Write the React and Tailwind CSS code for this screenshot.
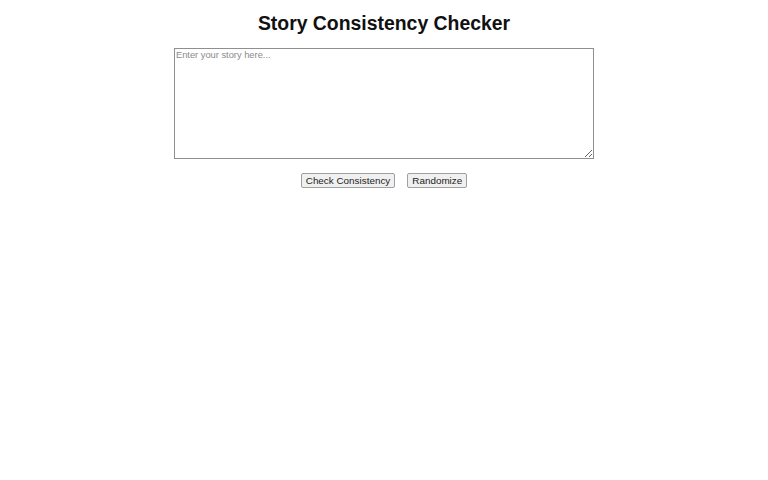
import React, { useState } from 'react'

const samples = [
  'Once upon a time, a girl named Mara lived in a lighthouse by the sea...',
  'The detective arrived at noon, although the clock had stopped at midnight...',
  'Captain Rell had never seen snow, yet he spoke of the winters of his youth...',
]

const App = () => {
  const [story, setStory] = useState('')

  const randomize = () => {
    setStory(samples[Math.floor(Math.random() * samples.length)])
  }

  return (
    <div className="min-h-screen bg-white font-['Liberation_Sans',Arial,sans-serif] text-black">
      <div className="flex flex-col items-center pt-[11px]">
        <h1 className="text-[19.4px] font-bold leading-[24px] text-[#111]">Story Consistency Checker</h1>

        <textarea
          className="mt-[13px] h-[111px] w-[420px] border border-[#8f8f8f] px-[1px] py-[1px] text-[9.3px] leading-[11px] text-[#333] placeholder:text-[#8a8a8a] outline-none"
          placeholder="Enter your story here..."
          value={story}
          onChange={(e) => setStory(e.target.value)}
        />

        <div className="mt-[14px] flex gap-[12px]">
          <button className="h-[15px] rounded-[2px] border border-[#a0a0a0] bg-[#f0f0f0] px-[4px] text-[9.9px] leading-[13px] text-[#222]">
            Check Consistency
          </button>
          <button
            onClick={randomize}
            className="h-[15px] rounded-[2px] border border-[#a0a0a0] bg-[#f0f0f0] px-[4px] text-[9.9px] leading-[13px] text-[#222]"
          >
            Randomize
          </button>
        </div>
      </div>
    </div>
  )
}

export default App
